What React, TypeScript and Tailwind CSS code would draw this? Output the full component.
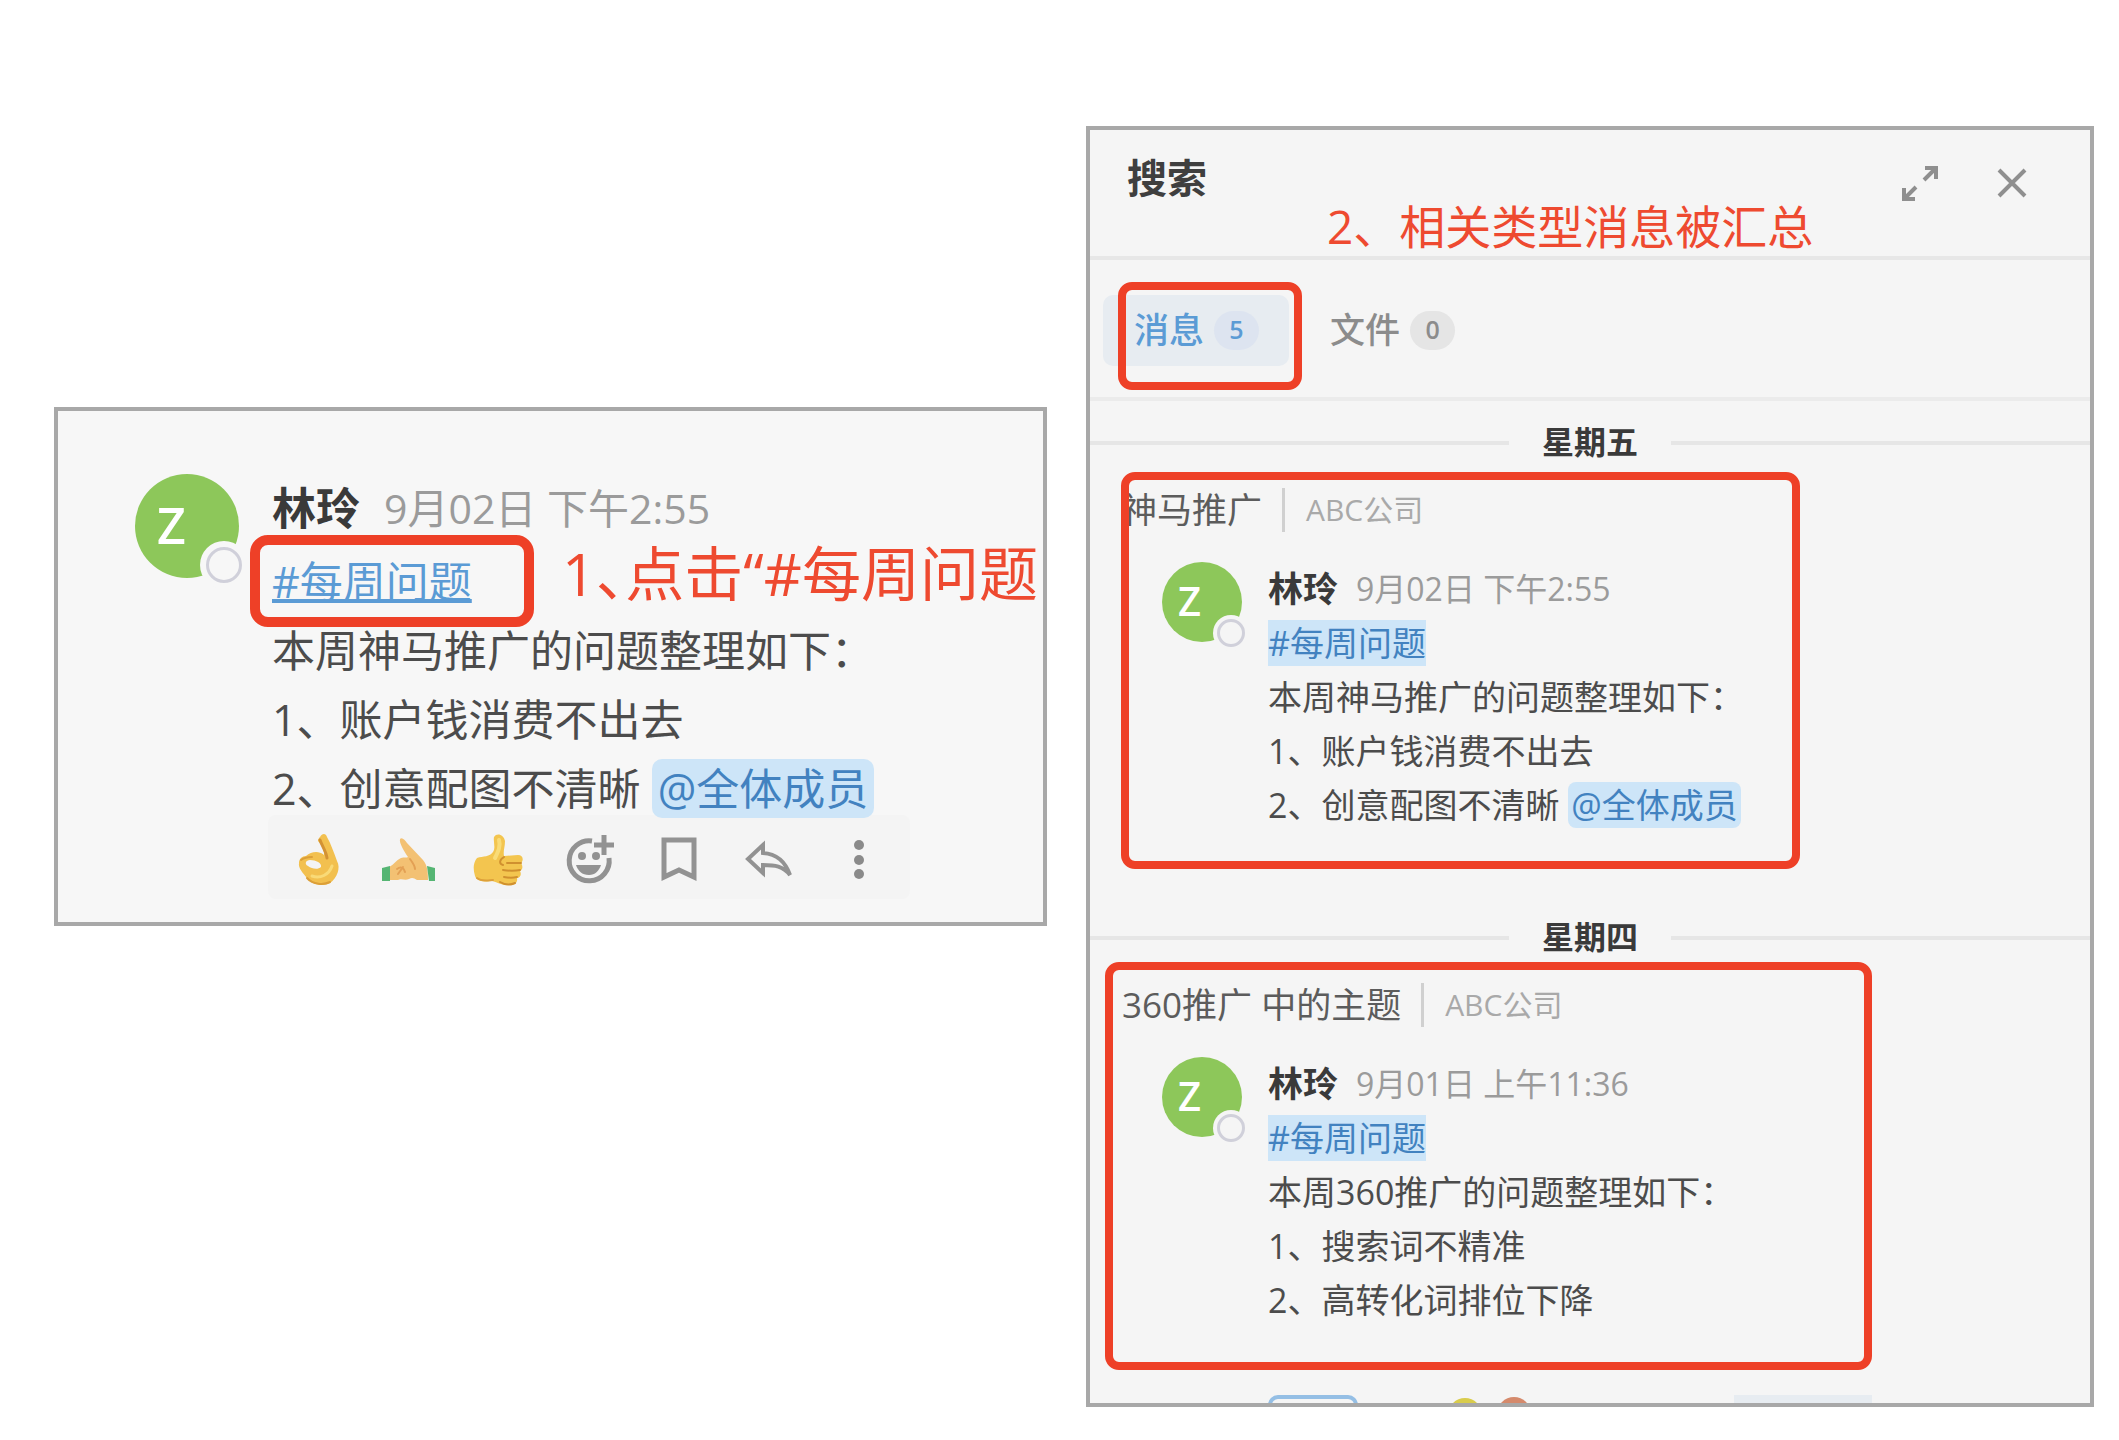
import { ReactNode } from "react";
import clsx from "clsx";

interface Result {
    day: string;
    channel: string;
    company: string;
    time: string;
    lines: string[];
    mention?: string;
    frame: string;
}

const results: Result[] = [
    {
        day: "星期五",
        channel: "神马推广",
        company: "ABC公司",
        time: "9月02日 下午2:55",
        lines: ["本周神马推广的问题整理如下：", "1、账户钱消费不出去", "2、创意配图不清晰"],
        mention: "@全体成员",
        frame: "left-[31px] top-[7px] w-[679px] h-[397px]",
    },
    {
        day: "星期四",
        channel: "360推广 中的主题",
        company: "ABC公司",
        time: "9月01日 上午11:36",
        lines: ["本周360推广的问题整理如下：", "1、搜索词不精准", "2、高转化词排位下降"],
        frame: "left-[15px] top-[2px] w-[767px] h-[408px]",
    },
];

function Frame ({ className }: { className: string }) {
    return <div aria-hidden="true" className={clsx("absolute pointer-events-none border-[#ee4027]", className)} />
}

function Avatar ({ large }: { large?: boolean }) {
    return (
        <div
            className={clsx(
                "relative shrink-0 rounded-full bg-[#8dc75a] text-white font-semibold",
                large ? "size-[104px] text-[50px] leading-[102px] pl-[22px]" : "size-[80px] text-[40px] leading-[78px] pl-[16px]"
            )}
        >
            Z
            <span
                className={clsx(
                    "absolute rounded-full",
                    large ? "size-[48px] left-[65px] top-[67px] p-[6px] bg-[#f7f7f7]" : "size-[36px] left-[51px] top-[53px] p-[4px] bg-[#f5f5f5]"
                )}
            >
                <span className="block size-full rounded-full border-[3px] border-[#d0d0da]" />
            </span>
        </div>
    )
}

function ToolButton ({ label, children }: { label: string, children: ReactNode }) {
    return (
        <button type="button" aria-label={label} className="flex flex-1 h-full items-center justify-center">
            <svg viewBox="0 0 56 56" className="size-[56px]" fill="none">
                {children}
            </svg>
        </button>
    )
}

function Toolbar () {
    return (
        <div className="flex items-center w-[642px] h-[84px] -ml-1 -mt-2 px-[6px] pt-[6px] rounded-lg bg-[#f4f4f4]">
            <ToolButton label="OK">
                <path fillRule="evenodd" fill="#f2c04f" d="M29 5C31 1 35 1 36 5C40 12 43 21 46 29C50 36 46 46 39 51C32 55 21 53 16 46C12 41 7 36 8 31C8 27 11 24 15 24C20 20 27 18 33 23C34 17 28 10 27 9C27 7 28 6 29 5ZM19 28C15 28 13 32 17 34C21 37 27 38 30 35C31 31 25 28 19 28Z" />
                <path stroke="#d39234" strokeWidth="3" strokeLinecap="round" d="M29 8C31 14 35 19 36 26" />
                <path stroke="#dc9f38" strokeWidth="2" strokeLinecap="round" d="M16 46C22 53 33 53 39 50M10 28C14 25 18 25 21 25" />
                <path stroke="#f9da77" strokeWidth="3" strokeLinecap="round" d="M21 44C29 47 38 43 41 34" />
            </ToolButton>
            <ToolButton label="击掌">
                <path fill="#f3c173" d="M19 7C21 5 24 8 26 11L42 28C45 32 47 35 47 48H36C33 46 31 45 28 47C24 49 20 46 17 48H8V35C13 33 15 28 20 26C23 25 26 26 27 25C23 19 18 11 19 7Z" />
                <path fill="#55b573" d="M1 36L9 34V49H1ZM46 34L54 36V49H48Z" />
                <path stroke="#e3a054" strokeWidth="2" strokeLinecap="round" d="M16 37C20 34 23 36 24 40M22 35L17 42M29 27C32 31 34 34 34 37" />
            </ToolButton>
            <ToolButton label="赞">
                <path fill="#f3c54f" d="M23 5C26 0 33 3 34 9C34 15 32 19 33 24L47 23C52 23 53 28 50 31C52 34 52 37 49 39C51 43 49 46 46 46C47 51 43 54 38 53C32 54 26 50 21 49C15 50 6 50 4 44C2 37 2 31 6 26C12 24 19 25 22 20C25 15 22 10 23 5Z" />
                <path stroke="#d0902f" strokeWidth="2" strokeLinecap="round" d="M33 25C28 28 28 32 32 33M36 31H50M32 38C38 39 44 39 49 38M33 45C38 46 42 46 46 45M29 50C34 53 40 53 44 51" />
                <path stroke="#dda03a" strokeWidth="2" strokeLinecap="round" d="M6 46C11 50 18 48 22 48" />
                <path stroke="#f9dc78" strokeWidth="4" strokeLinecap="round" d="M28 8C30 14 27 20 24 26" />
            </ToolButton>
            <ToolButton label="添加表情">
                <path stroke="#929292" strokeWidth="5" d="M31 9A20 20 0 1 0 48 26" />
                <circle cx="21" cy="24" r="4" fill="#929292" />
                <circle cx="35" cy="24" r="4" fill="#929292" />
                <path fill="#929292" d="M15 33H40C38 39 34 43 28 43C21 43 17 39 15 33Z" />
                <path stroke="#929292" strokeWidth="5" d="M43 3V23M33 13H53" />
            </ToolButton>
            <ToolButton label="收藏">
                <path stroke="#929292" strokeWidth="5" d="M13 8H43V45L28 38L13 45Z" />
            </ToolButton>
            <ToolButton label="回复">
                <path stroke="#929292" strokeWidth="4" d="M7 27L22 13V21C36 22 44 29 49 43C42 34 34 33 22 33V41Z" />
            </ToolButton>
            <ToolButton label="更多">
                <circle cx="28" cy="13" r="5" fill="#8a8a8a" />
                <circle cx="28" cy="28" r="5" fill="#8a8a8a" />
                <circle cx="28" cy="42" r="5" fill="#8a8a8a" />
            </ToolButton>
        </div>
    )
}

function MessageCard () {
    return (
        <section className="relative mt-[281px] flex gap-x-[33px] overflow-hidden border-4 border-[#a8a8a8] bg-[#f7f7f7] pl-[77px] pt-[63px] pb-[23px]">
            <Avatar large />
            <div className="min-w-0 flex-1 whitespace-nowrap">
                <div className="flex h-[73px] items-start gap-x-[24px]">
                    <b className="text-[44px] leading-[68px] text-[#3a3a3a]">林玲</b>
                    <time className="text-[41px] leading-[68px] text-[#9b9b9b]">9月02日 下午2:55</time>
                </div>
                <div className="relative z-10 text-[43px] leading-[69px] text-[#4c4c4c]">
                    <p>
                        <a href="#weekly" className="text-[#5b9bd5] underline decoration-[4px] underline-offset-[1px] [text-decoration-skip-ink:none]">#每周问题</a>
                    </p>
                    <p>本周神马推广的问题整理如下：</p>
                    <p>1、账户钱消费不出去</p>
                    <p>2、创意配图不清晰 <span className="rounded-[10px] bg-[#cde5f8] px-[6px] text-[#4282c0]">@全体成员</span></p>
                </div>
                <Toolbar />
            </div>
            <Frame className="left-[192px] top-[124px] h-[92px] w-[284px] rounded-[18px] border-[10px]" />
            <p className="absolute left-[504px] top-[122px] whitespace-nowrap text-[59px] leading-[80px] text-[#ee4a30]">
                1<span className="[font-feature-settings:'halt']">、</span>点击“#每周问题
            </p>
        </section>
    )
}

function ResultItem ({ result, children }: { result: Result, children?: ReactNode }) {
    return (
        <section className="whitespace-nowrap">
            <div className="flex h-[44px] items-center gap-x-[33px] text-[32px] leading-[42px] text-[#3a3a3a]">
                <span className="h-[4px] flex-1 bg-[#e6e6e6]" />
                <b className="h-[44px]">{result.day}</b>
                <span className="h-[4px] flex-1 bg-[#e6e6e6]" />
            </div>
            <div className="relative pl-[32px] pt-[23px]">
                <div className="flex h-[44px] items-center">
                    <span className="text-[35px] leading-[44px] text-[#5c5c5c]">{result.channel}</span>
                    <span className="ml-[20px] mr-[21px] h-full w-[3px] bg-[#d0d0d0]" />
                    <span className="text-[30px] leading-[44px] text-[#a9a9a9]">{result.company}</span>
                </div>
                <div className="mt-[30px] flex gap-x-[26px] pl-[40px]">
                    <Avatar />
                    <div className="text-[34px] leading-[54px] text-[#4c4c4c]">
                        <div className="flex items-center gap-x-[18px]">
                            <b className="text-[35px] text-[#3a3a3a]">林玲</b>
                            <time className="text-[32px] text-[#9b9b9b]">{result.time}</time>
                        </div>
                        <p>
                            <a href="#weekly" className="bg-[#cde5f8] text-[#4282c0]">#每周问题</a>
                        </p>
                        {result.lines.map((line, i) => (
                            <p key={line}>
                                {line}
                                {result.mention && i === result.lines.length - 1 && (
                                    <> <span className="rounded-[8px] bg-[#cde5f8] px-[3px] text-[#4282c0]">{result.mention}</span></>
                                )}
                            </p>
                        ))}
                        {children}
                    </div>
                </div>
                <Frame className={clsx("rounded-[14px] border-8", result.frame)} />
            </div>
        </section>
    )
}

function Tab ({ label, count, active }: { label: string, count: number, active?: boolean }) {
    return (
        <button
            type="button"
            role="tab"
            aria-selected={!!active}
            className={clsx(
                "flex h-[71px] items-center gap-x-[10px] rounded-[10px] pl-[31px] pr-[30px] text-[35px] font-medium",
                active ? "bg-[#e7ecf1] text-[#5b9bd5]" : "text-[#8c8c8c]"
            )}
        >
            {label}
            <span
                className={clsx(
                    "flex h-[39px] w-[45px] items-center justify-center rounded-full text-[25px] font-semibold",
                    active ? "bg-[#dde4f0]" : "bg-[#e5e5e5]"
                )}
            >
                {count}
            </span>
        </button>
    )
}

function SearchPanel () {
    return (
        <section className="overflow-hidden border-4 border-[#a8a8a8] bg-[#f5f5f5]">
            <header className="relative flex h-[130px] items-start border-b-4 border-[#e7e7e7] pl-[37px] pr-[58px] pt-[21px]">
                <h2 className="flex-1 text-[40px] font-bold leading-[54px] text-[#3f3f3f]">搜索</h2>
                <button type="button" aria-label="展开" className="mt-[12px] mr-[52px]">
                    <svg viewBox="0 0 40 40" className="size-[40px]" fill="none" stroke="#8f8f8f" strokeWidth="4">
                        <path d="M25 5H36V16M36 5L24 17M4 25V36H15M4 36L16 24" />
                    </svg>
                </button>
                <button type="button" aria-label="关闭" className="mt-[12px]">
                    <svg viewBox="0 0 40 40" className="size-[40px]" fill="none" stroke="#8f8f8f" strokeWidth="4">
                        <path d="M7 7L33 33M33 7L7 33" />
                    </svg>
                </button>
                <p className="absolute left-[237px] top-[66px] whitespace-nowrap text-[46px] leading-[60px] text-[#ee4a30]">
                    2、相关类型消息被汇总
                </p>
            </header>
            <div role="tablist" className="relative flex h-[141px] items-center gap-x-[10px] border-b-4 border-[#ebebeb] pl-[13px] pt-[3px]">
                <Tab label="消息" count={5} active />
                <Tab label="文件" count={0} />
                <Frame className="left-[28px] top-[22px] h-[108px] w-[184px] rounded-[14px] border-8" />
            </div>
            <div className="flex flex-col gap-y-[84px] pt-[20px]">
                <ResultItem result={results[0]} />
                <ResultItem result={results[1]}>
                    {/* reactions of the message, cut off by the panel's edge */}
                    <div className="mt-[68px] flex h-[8px] items-start overflow-hidden">
                        <span className="h-[48px] w-[90px] shrink-0 rounded-[10px] border-4 border-[#95bfe5]" />
                        <span className="ml-[90px] mt-[3px] size-[34px] shrink-0 rounded-full bg-[#d9cc4c]" />
                        <span className="ml-[15px] mt-[2px] size-[34px] shrink-0 rounded-full bg-[#d58a6c]" />
                        <span className="ml-[203px] h-[48px] w-[138px] shrink-0 bg-[#e7ecf1]" />
                    </div>
                </ResultItem>
            </div>
        </section>
    )
}

export default function App () {
    return (
        <main className="grid min-h-screen grid-cols-[993fr_1008fr] items-start gap-x-[39px] bg-white pl-[54px] pr-[25px] pt-[126px] pb-[34px] font-['Open_Sans','Noto_Sans_CJK_SC',sans-serif]">
            <MessageCard />
            <SearchPanel />
        </main>
    )
}
